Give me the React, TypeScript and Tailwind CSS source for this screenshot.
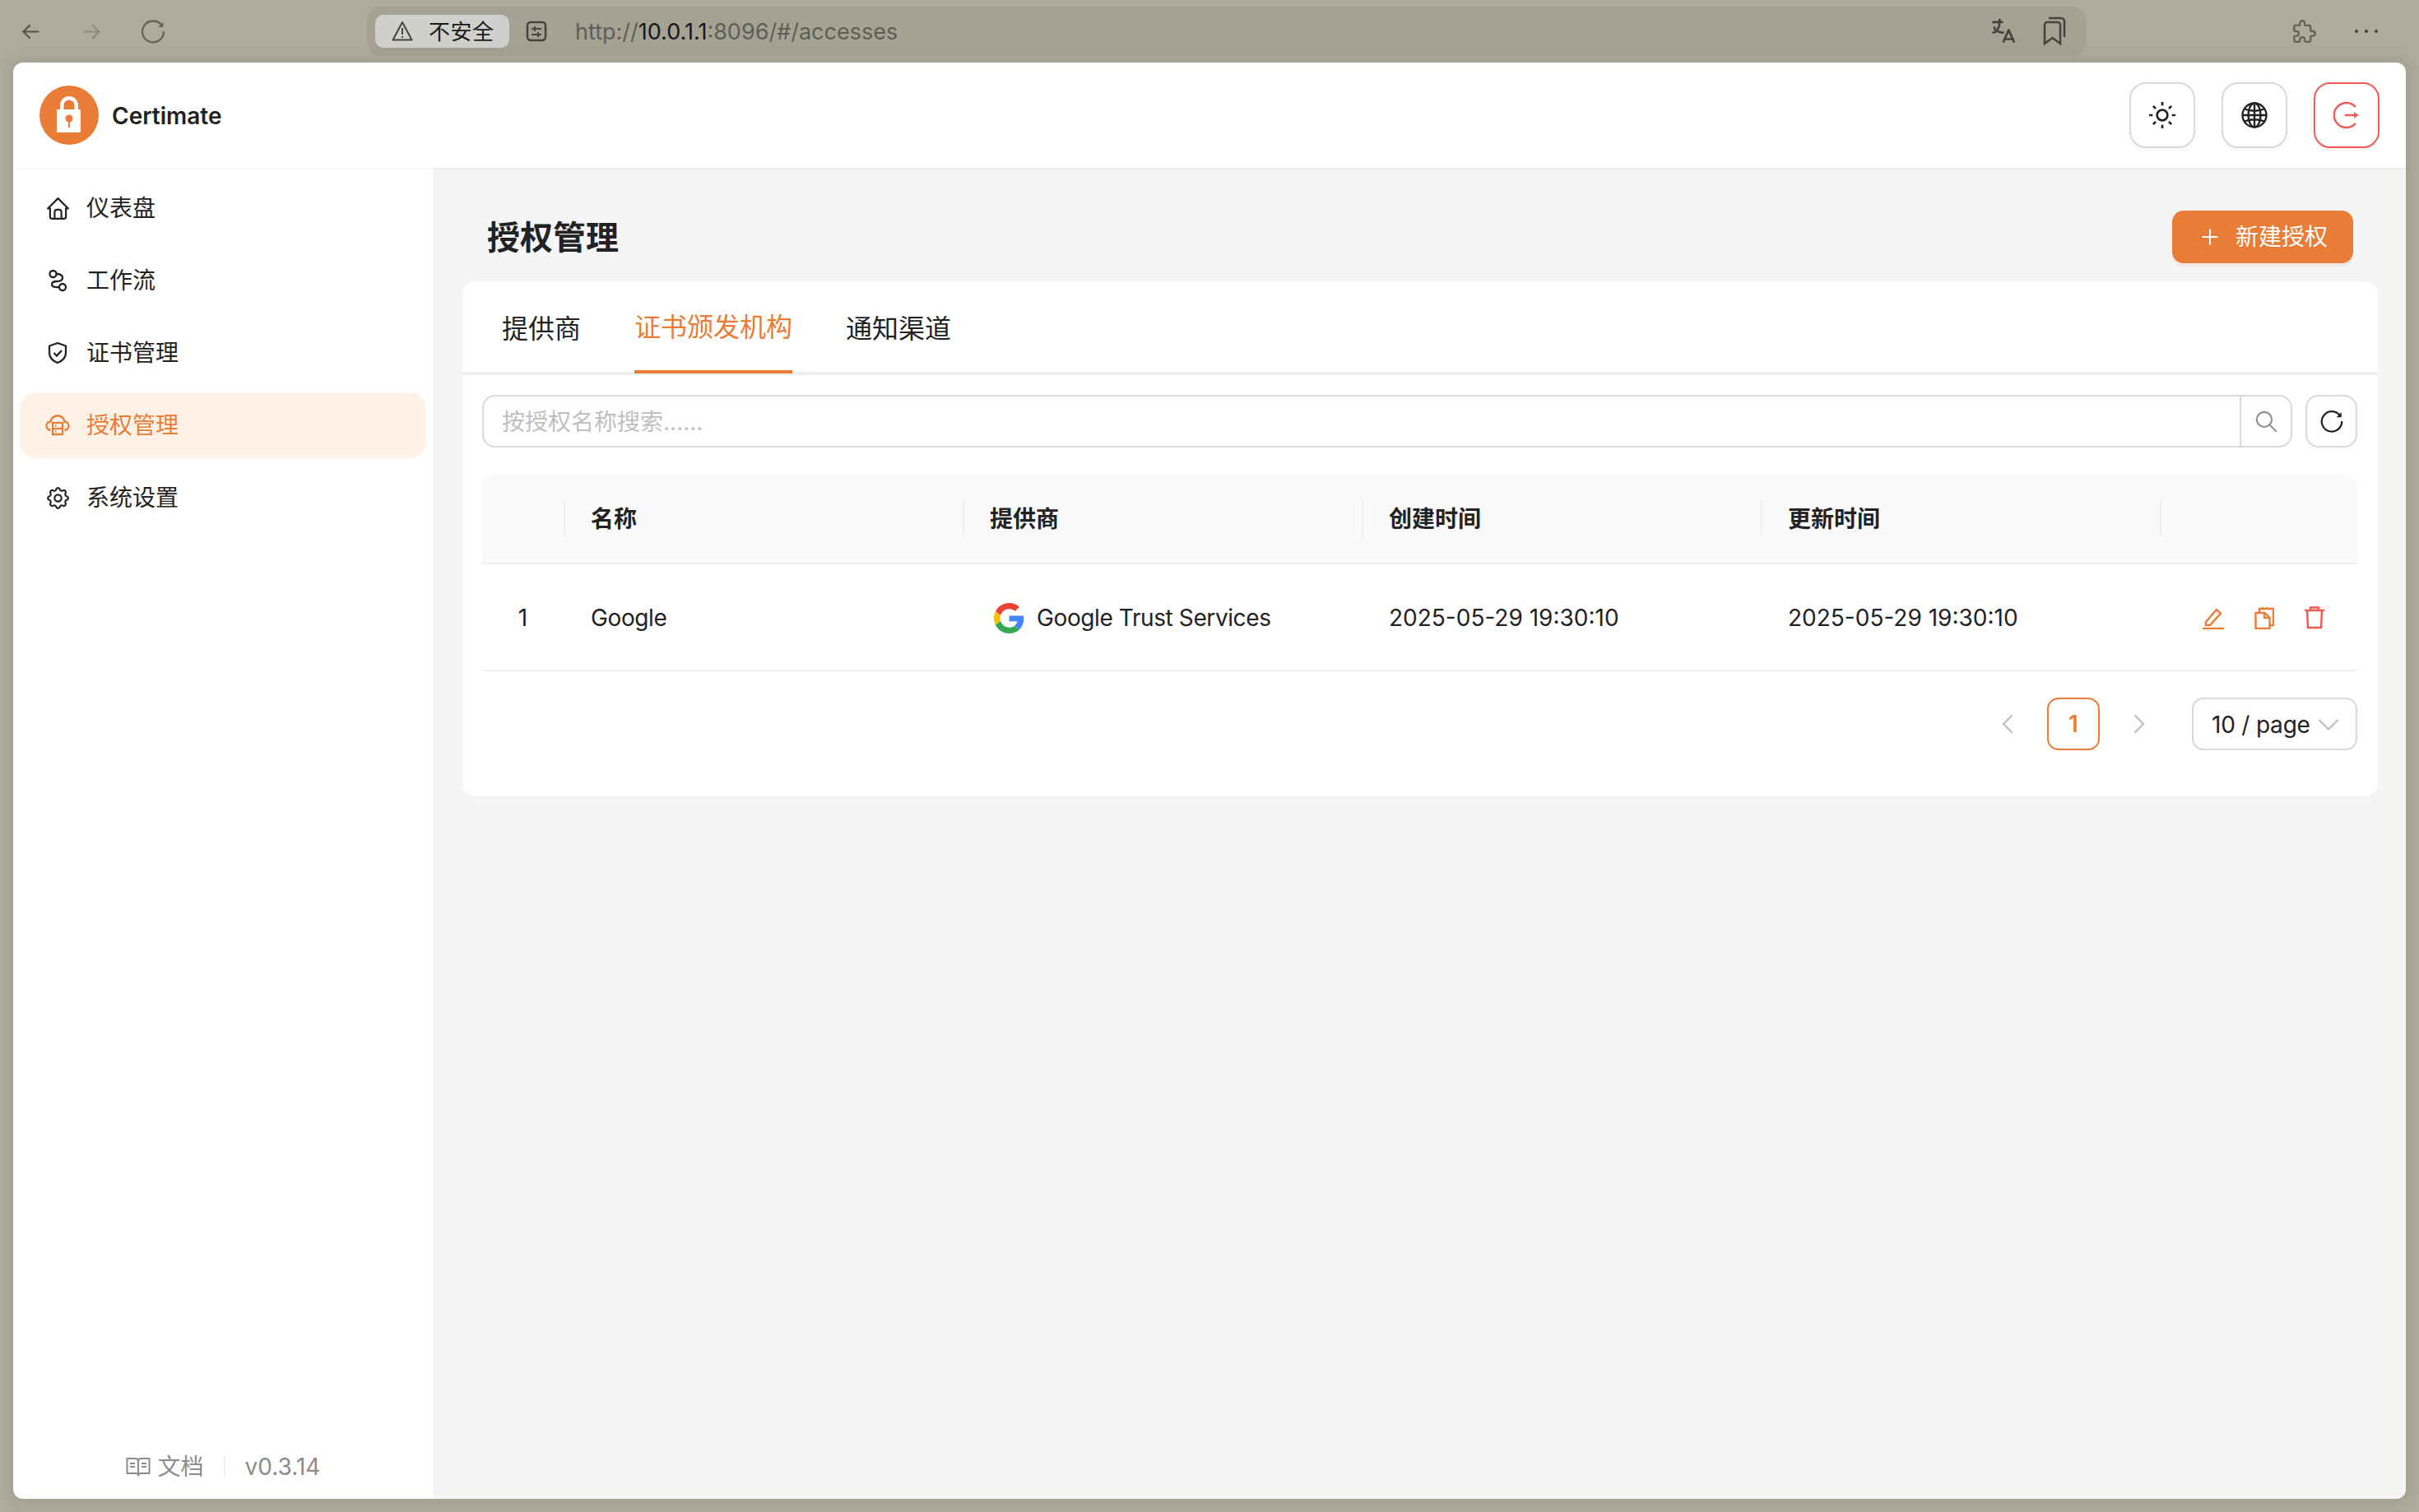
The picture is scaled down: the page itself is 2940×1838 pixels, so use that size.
import { TbHome, TbSettings, TbPlus, TbSearch, TbChevronLeft, TbChevronRight, TbChevronDown, TbArrowLeft, TbArrowRight, TbPuzzle, TbLanguage } from 'react-icons/tb';

const font = "font-['Inter','Noto_Sans_CJK_SC',sans-serif]";

function Logo() {
  return (
    <svg width="72" height="72" viewBox="0 0 72 72">
      <circle cx="36" cy="36" r="36" fill="#e97c37" />
      <path d="M21 29h4v-5a11 11 0 0 1 22 0v5h3v28H21z" fill="#fff" />
      <path d="M29.500 29v-5a6.500 6.500 0 0 1 13 0v5z" fill="#e97c37" />
      <circle cx="36" cy="40" r="4.500" fill="#e97c37" />
      <rect x="35" y="41" width="2" height="10" fill="#e97c37" />
    </svg>
  );
}

function RouteIcon() {
  return (
    <svg width="24" height="28" viewBox="0 0 24 28" fill="none" stroke="#222" strokeWidth="2.300">
      <circle cx="6.500" cy="6" r="4" />
      <circle cx="18" cy="22" r="4" />
      <path d="M10.500 6c5 0 7.500 2 7.500 4.500S15.500 15 11 15s-6 2-6 4 2 3.500 9 3" />
    </svg>
  );
}

function ShieldIcon() {
  return (
    <svg width="24" height="28" viewBox="0 0 24 28" fill="none" stroke="#222" strokeWidth="2.300">
      <path d="M12 2 22 5.500V14c0 6-4.500 9.800-10 12C6.500 23.800 2 20 2 14V5.500z" strokeLinejoin="round" />
      <path d="M7.500 14l3.500 3.500 6-6.500" />
    </svg>
  );
}

function AccessIcon() {
  return (
    <svg width="30" height="30" viewBox="0 0 30 30" fill="none" stroke="#e97c37" strokeWidth="2.300">
      <path d="M6.500 21C3 20.500 1.500 18 1.500 15.500 1.500 12.500 4 10.500 6.500 10.500 7.500 6 11 3.500 15 3.500S22.500 6 23.500 10.500C26 10.500 28.500 12.500 28.500 15.500 28.500 18 27 20.500 23.500 21" />
      <rect x="9" y="12" width="12" height="14" />
      <path d="M9 19h12" />
      <path d="M12 15.500h1.500M12 22.500h1.500" />
    </svg>
  );
}

function Sun() {
  return (
    <svg width="34" height="34" viewBox="0 0 32 32" fill="none" stroke="#222" strokeWidth="2.500">
      <circle cx="16" cy="16" r="6" />
      <path d="M16 1v4M16 27v4M1 16h4M27 16h4M5.500 5.500l3 3M23.500 23.500l3 3M26.500 5.500l-3 3M8.500 23.500l-3 3" />
    </svg>
  );
}

function Globe() {
  return (
    <svg width="32" height="32" viewBox="0 0 32 32" fill="none" stroke="#222" strokeWidth="2.400">
      <circle cx="16" cy="16" r="14.500" />
      <ellipse cx="16" cy="16" rx="7.500" ry="14.500" />
      <path d="M16 1.500v29M1.500 16h29M4 8.500c7 3 17 3 24 0M4 23.500c7-3 17-3 24 0" />
    </svg>
  );
}

function Logout() {
  return (
    <svg width="32" height="34" viewBox="0 0 32 34" fill="none" stroke="#ef5a55" strokeWidth="2.500">
      <path d="M27 7A15 15 0 1 0 27 27" />
      <path d="M14 17h16" />
      <path d="M25 13l5 4-5 4z" fill="#ef5a55" stroke="none" />
    </svg>
  );
}

function ReloadIcon({ size, color }: { size: number; color: string }) {
  return (
    <svg width={size} height={size} viewBox="0 0 32 32" fill="none" stroke={color} strokeWidth="2.400">
      <path d="M27 9.500A13 13 0 1 0 29 16" />
      <path d="M28.500 4.500v6.500H22z" fill={color} stroke="none" />
    </svg>
  );
}

function GoogleG() {
  return (
    <svg width="37" height="37" viewBox="0 0 48 48">
      <path fill="#EA4335" d="M24 9.500c3.500 0 6.700 1.200 9.200 3.600l6.900-6.900C35.900 2.400 30.500 0 24 0 14.600 0 6.500 5.400 2.600 13.200l8 6.200C12.400 13.700 17.700 9.500 24 9.500z" />
      <path fill="#4285F4" d="M47 24.500c0-1.600-.1-3.100-.4-4.500H24v9h12.900c-.6 3-2.300 5.500-4.800 7.200l7.700 6c4.500-4.200 7.200-10.300 7.200-17.700z" />
      <path fill="#FBBC05" d="M10.500 28.600c-.5-1.400-.8-3-.8-4.600s.3-3.200.8-4.600l-8-6.200C.9 16.500 0 20.100 0 24s.9 7.500 2.600 10.800l7.900-6.200z" />
      <path fill="#34A853" d="M24 48c6.500 0 11.900-2.100 15.900-5.800l-7.700-6c-2.200 1.500-4.900 2.300-8.200 2.300-6.300 0-11.600-4.200-13.500-9.900l-8 6.200C6.500 42.600 14.600 48 24 48z" />
    </svg>
  );
}

const navItems = [
  { label: '仪表盘', icon: <TbHome size={33} strokeWidth={1.6} /> },
  { label: '工作流', icon: <RouteIcon /> },
  { label: '证书管理', icon: <ShieldIcon /> },
  { label: '授权管理', icon: <AccessIcon />, active: true },
  { label: '系统设置', icon: <TbSettings size={33} strokeWidth={1.6} /> },
];

const columns = ['', '名称', '提供商', '创建时间', '更新时间', ''];

export default function App() {
  return (
    <div className={`${font} w-[2940px] h-[1838px] flex flex-col bg-[#aeab9b] text-[#222]`}>
      {/* browser chrome */}
      <div className="h-[76px] flex shrink-0 pt-[8px]">
        <div className="w-[446px] h-[60px] flex items-center pl-[22px] gap-[43px] text-[#55544c]">
          <TbArrowLeft size={31} strokeWidth={1.6} />
          <TbArrowRight size={31} strokeWidth={1.6} className="text-[#8d8b7e]" />
          <ReloadIcon size={32} color="#66655c" />
        </div>
        <div className="w-[2090px] h-[60px] rounded-[18px] bg-[#a5a293] flex items-center pl-[10px] pr-[24px]">
          <div className="w-[163px] h-[40px] rounded-[10px] bg-[#cfcfcb] flex items-center pl-[20px] gap-[19px] text-[26px] text-[#1a1a1a]">
            <svg width="26" height="26" viewBox="0 0 26 26" fill="none" stroke="#444" strokeWidth="2">
              <path d="M13 2 24.500 23.500H1.500z" strokeLinejoin="round" />
              <path d="M13 9v8M13 19v2" />
            </svg>
            <span className="tracking-[0.5px]">不安全</span>
          </div>
          <svg width="26" height="26" viewBox="0 0 26 26" fill="none" stroke="#44433d" strokeWidth="2.500" className="ml-[20px]">
            <rect x="2" y="2" width="22" height="22" rx="4" />
            <path d="M7 10h12M7 17h12M11 7v6M15 14v6" strokeWidth="2" />
          </svg>
          <div className="ml-[34px] mt-[2px] text-[27px] text-[#5f5e56] whitespace-nowrap">
            http://<span className="text-[#16161a]">10.0.1.1</span>:8096/#/accesses
          </div>
          <div className="ml-auto flex items-center gap-[28px] text-[#44433d]">
            <TbLanguage size={38} strokeWidth={1.7} />
            <svg width="30" height="36" viewBox="0 0 30 36" fill="none" stroke="#44433d" strokeWidth="2.500">
              <path d="M3 33V10a3 3 0 0 1 3-3h13a3 3 0 0 1 3 3v23L12.500 26z" />
              <path d="M8 2h15a4 4 0 0 1 4 4v19" />
            </svg>
          </div>
        </div>
        <div className="flex-1 h-[60px] flex items-center pl-[248px] gap-[44px] text-[#66655c]">
          <TbPuzzle size={34} strokeWidth={1.7} />
          <div className="flex gap-[8px]">
            <span className="w-[4px] h-[4px] rounded-full bg-[#44433d]" />
            <span className="w-[4px] h-[4px] rounded-full bg-[#44433d]" />
            <span className="w-[4px] h-[4px] rounded-full bg-[#44433d]" />
          </div>
        </div>
      </div>

      {/* app window */}
      <div className="mx-[16px] mb-[16px] flex-1 flex flex-col bg-white rounded-[12px] overflow-hidden shadow-[0_0_20px_rgba(0,0,0,0.12)]">
        <header className="h-[128px] shrink-0 flex items-center pl-[32px] pr-[32px] shadow-[0_2px_4px_rgba(0,0,0,0.04)] relative">
          <Logo />
          <span className="ml-[16px] mt-[2px] text-[28px] font-semibold">Certimate</span>
          <div className="ml-auto flex gap-[32px]">
            <button className="w-[80px] h-[80px] rounded-[20px] border-2 border-[#d9d9d9] flex items-center justify-center shadow-[0_4px_0_rgba(0,0,0,0.02)]"><Sun /></button>
            <button className="w-[80px] h-[80px] rounded-[20px] border-2 border-[#d9d9d9] flex items-center justify-center shadow-[0_4px_0_rgba(0,0,0,0.02)]"><Globe /></button>
            <button className="w-[80px] h-[80px] rounded-[20px] border-2 border-[#ef5a55] flex items-center justify-center shadow-[0_4px_0_rgba(255,80,80,0.06)]"><Logout /></button>
          </div>
        </header>

        <div className="flex-1 flex min-h-0">
          <aside className="w-[510px] shrink-0 flex flex-col px-[8px] pt-[9px] pb-[18px]">
            <nav className="flex flex-col gap-[8px]">
              {navItems.map((item) => (
                <div
                  key={item.label}
                  className={`h-[80px] flex items-center rounded-[20px] text-[28px] ${item.active ? 'bg-[#fef2e7] text-[#e97c37]' : 'text-[#222]'}`}
                >
                  <span className="w-[46px] ml-[23px] flex justify-center">{item.icon}</span>
                  <span className="ml-[12px]">{item.label}</span>
                </div>
              ))}
            </nav>
            <div className="mt-auto flex items-center justify-center text-[28px] text-[#8c8c8c]">
              <svg width="30" height="24" viewBox="0 0 30 24" fill="none" stroke="#8c8c8c" strokeWidth="2">
                <path d="M1.500 2h10c2 0 3.500 1 3.500 3 0-2 1.500-3 3.500-3h10v18H18c-1.500 0-2.500.5-3 2-.5-1.500-1.500-2-3-2H1.500zM15 5v17" />
                <path d="M5 8h6M5 12h6M19 8h6M19 12h6" />
              </svg>
              <span className="ml-[9px]">文档</span>
              <span className="w-[2px] h-[26px] bg-[#f0f0f0] mx-[24px]" />
              <span>v0.3.14</span>
            </div>
          </aside>

          <main className="flex-1 bg-[#f5f5f5] pl-[36px] pr-[34px] pt-[52px]">
            <div className="h-[64px] flex items-center justify-between pl-[30px] pr-[30px]">
              <h1 className="mt-[2px] text-[40px] font-semibold">授权管理</h1>
              <button className="w-[220px] h-[64px] rounded-[14px] bg-[#e97c37] text-white flex items-center justify-center gap-[16px] text-[28px] shadow-[0_4px_0_rgba(233,124,55,0.1)]">
                <TbPlus size={30} strokeWidth={1.6} />
                新建授权
              </button>
            </div>

            <section className="mt-[22px] h-[626px] bg-white rounded-[16px] shadow-[0_2px_2px_rgba(0,0,0,0.02)]">
              <div className="h-[114px] border-b-4 border-[#f0f0f0] flex pl-[48px] gap-[65px] text-[32px]">
                <div className="h-[112px] flex items-center pt-[4px]">提供商</div>
                <div className="h-[112px] flex items-center pt-[4px] text-[#e97c37] border-b-4 border-[#e97c37]">证书颁发机构</div>
                <div className="h-[112px] flex items-center pt-[4px]">通知渠道</div>
              </div>

              <div className="pl-[24px] pr-[25px] pt-[24px]">
                <div className="flex gap-[16px]">
                  <div className="flex-1 h-[64px] border-2 border-[#d9d9d9] rounded-[16px] flex items-center">
                    <span className="flex-1 pl-[22px] mt-[2px] text-[28px] text-[#bfbfbf]">按授权名称搜索......</span>
                    <span className="w-[62px] h-full border-l-2 border-[#d9d9d9] flex items-center justify-center text-[#8c8c8c]">
                      <TbSearch size={31} strokeWidth={1.6} />
                    </span>
                  </div>
                  <button className="w-[63px] h-[64px] border-2 border-[#d9d9d9] rounded-[16px] flex items-center justify-center shadow-[0_4px_0_rgba(0,0,0,0.02)]">
                    <ReloadIcon size={30} color="#222" />
                  </button>
                </div>

                <div className="mt-[32px]">
                  <div className="h-[110px] grid grid-cols-[99px_485px_485px_485px_485px_1fr] bg-[#fafafa] rounded-t-[16px] border-b-2 border-[#f0f0f0] text-[28px] font-semibold">
                    {columns.map((col, i) => (
                      <div key={i} className="flex items-center">
                        {i > 0 && <span className="w-[2px] h-[44px] bg-[#f0f0f0]" />}
                        {col && <span className="ml-[31px] mt-[2px]">{col}</span>}
                      </div>
                    ))}
                  </div>
                  <div className="h-[130px] pt-[2px] grid grid-cols-[99px_485px_485px_485px_485px_1fr] items-center border-b-2 border-[#f0f0f0] text-[28px]">
                    <div className="text-center">1</div>
                    <div className="pl-[33px] tracking-[-0.4px]">Google</div>
                    <div className="pl-[38px] flex items-center gap-[15px]">
                      <GoogleG />
                      <span className="tracking-[-0.4px]">Google Trust Services</span>
                    </div>
                    <div className="pl-[33px]">2025-05-29 19:30:10</div>
                    <div className="pl-[33px]">2025-05-29 19:30:10</div>
                    <div className="flex items-center pl-[51px] gap-[36px]">
                      <svg width="28" height="28" viewBox="0 0 28 28" fill="none" stroke="#e97c37" strokeWidth="2.400">
                        <path d="M5 19 18 4l5 4.500L10 23H5z" />
                        <path d="M1 27h26" />
                      </svg>
                      <svg width="24" height="28" viewBox="0 0 24 28" fill="none" stroke="#e97c37" strokeWidth="2.400">
                        <path d="M1.500 8h11l6 6v13h-17zM12 8v6h6" />
                        <path d="M6 8V3h17v20h-4M10 1v3M15 1v3" />
                      </svg>
                      <svg width="26" height="28" viewBox="0 0 26 28" fill="none" stroke="#ef5a55" strokeWidth="2.400">
                        <path d="M1 5h24M4 5l1 21h16l1-21M8 5V1.500h10V5" />
                      </svg>
                    </div>
                  </div>

                  <div className="mt-[32px] h-[64px] flex items-center justify-end text-[28px]">
                    <TbChevronLeft size={40} strokeWidth={1.3} className="text-[#bfbfbf]" />
                    <div className="ml-[28px] w-[64px] h-[64px] rounded-[14px] border-2 border-[#e97c37] text-[#e97c37] font-semibold flex items-center justify-center">1</div>
                    <TbChevronRight size={40} strokeWidth={1.3} className="ml-[28px] text-[#bfbfbf]" />
                    <div className="ml-[44px] w-[201px] h-[64px] rounded-[14px] border-2 border-[#d9d9d9] flex items-center pl-[22px] pt-[2px]">
                      <span className="tracking-[-0.2px]">10 / page</span>
                      <TbChevronDown size={44} strokeWidth={1.2} className="text-[#bfbfbf]" />
                    </div>
                  </div>
                </div>
              </div>
            </section>
          </main>
        </div>
      </div>
    </div>
  );
}
